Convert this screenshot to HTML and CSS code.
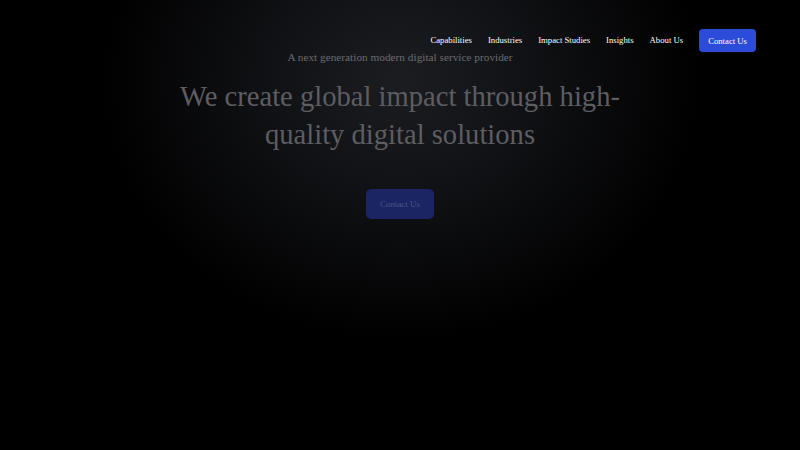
FILE: index.html
```html
<!DOCTYPE html>
<html>
<head>
<meta charset="utf-8">
<link rel="stylesheet" href="styles.css">
</head>
<body>
<div class="page">
  <header class="nav">
    <a class="nav-link" href="#">Capabilities</a>
    <a class="nav-link" href="#">Industries</a>
    <a class="nav-link" href="#">Impact Studies</a>
    <a class="nav-link" href="#">Insights</a>
    <a class="nav-link" href="#">About Us</a>
    <a class="nav-cta" href="#">Contact Us</a>
  </header>
  <section class="hero">
    <p class="hero-sub">A next generation modern digital service provider</p>
    <h1 class="hero-title">We create global impact through high-quality digital solutions</h1>
    <a class="hero-cta" href="#">Contact Us</a>
  </section>
</div>
</body>
</html>
```
FILE: styles.css
```css
html, body {
  margin: 0;
  padding: 0;
  height: 100%;
}
body {
  background: #000;
  font-family: "Liberation Serif", "Times New Roman", serif;
}
.page {
  min-height: 450px;
  background: radial-gradient(ellipse 300px 260px at 50% 18%, #1c1d21 0%, #101114 45%, #000 100%);
}
.nav {
  display: flex;
  justify-content: flex-end;
  align-items: center;
  gap: 16px;
  padding: 29px 44px 0 0;
  height: 23px;
}
.nav-link {
  color: #fff;
  font-size: 8.7px;
  line-height: 10px;
  text-decoration: none;
  margin-top: -1px;
}
.nav-cta {
  color: #fff;
  font-size: 8.7px;
  text-decoration: none;
  background: #2b4bd8;
  border-radius: 4px;
  height: 23px;
  padding: 0 9px;
  display: flex;
  align-items: center;
}
.hero {
  display: flex;
  flex-direction: column;
  align-items: center;
  text-align: center;
  margin-top: -1px;
}
.hero-sub {
  margin: 0;
  font-size: 11.3px;
  line-height: 13px;
  color: #6b6b70;
}
.hero-title {
  margin: 14px 0 0;
  max-width: 480px;
  font-size: 28.6px;
  line-height: 38px;
  font-weight: normal;
  color: #5d5d62;
}
.hero-cta {
  margin-top: 35px;
  height: 30px;
  padding: 0 14px;
  display: flex;
  align-items: center;
  background: #1b2564;
  border-radius: 5px;
  color: #4c5382;
  font-size: 9px;
  text-decoration: none;
}
```
